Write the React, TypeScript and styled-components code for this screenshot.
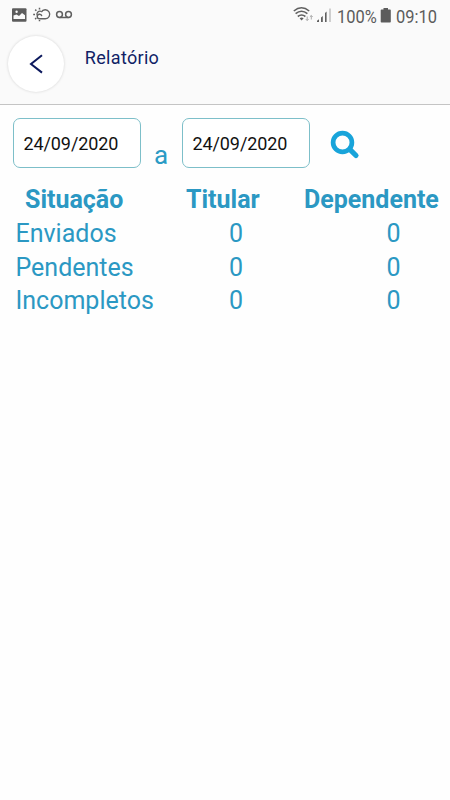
import React from "react";
import styled, { createGlobalStyle } from "styled-components";

const GlobalStyle = createGlobalStyle`
  * { box-sizing: border-box; }
  body { margin: 0; background: #fefefe; font-family: Roboto, "Noto Sans", sans-serif; }
`;

const Screen = styled.div`
  width: 450px;
  height: 800px;
  overflow: hidden;
  background: #fefefe;
`;

const Header = styled.header`
  height: 105px;
  background: #fafafa;
  border-bottom: 1px solid #c4c4c4;
`;

const StatusBar = styled.div`
  display: flex;
  justify-content: space-between;
  height: 32px;
  color: #5c5c5c;
  svg { display: block; flex: none; }
`;

const StatusText = styled.span<{ $left: number; $width: number }>`
  width: ${(p) => p.$width}px;
  margin-left: ${(p) => p.$left}px;
  font-size: 19px;
  line-height: 33px;
  white-space: nowrap;
  transform: scaleX(0.865);
  transform-origin: left center;
`;

const StatusGroup = styled.div`
  display: flex;
  width: 157px;
`;

const TitleBar = styled.div`
  display: flex;
  padding-left: 8px;
`;

const BackButton = styled.button`
  display: flex;
  align-items: center;
  justify-content: center;
  width: 56px;
  height: 56px;
  margin-top: 4px;
  padding: 0;
  border: 0;
  border-radius: 50%;
  background: #fff;
  box-shadow: 0 0 3px rgba(0, 0, 0, 0.16);
`;

const Title = styled.h1`
  margin: 15px 0 0 20.8px;
  color: #101f66;
  font-size: 18px;
  font-weight: 400;
  line-height: 22px;
  letter-spacing: 0.32px;
`;

const Filters = styled.form`
  display: flex;
  height: 78px;
  padding: 13px 0 0 13px;
`;

const DateField = styled.div`
  width: 128px;
  height: 50px;
  padding-left: 9.4px;
  border: 1px solid #7dbfc9;
  border-radius: 7px;
  background: #fff;
  color: #111;
  font-size: 18px;
  line-height: 50px;
  letter-spacing: -0.08px;
`;

const Separator = styled.span`
  width: 41px;
  padding: 21px 0 0 13px;
  color: #2b9bc5;
  font-size: 26px;
  line-height: 32px;
`;

const SearchButton = styled.button`
  width: 30px;
  height: 30px;
  margin: 12px 0 0 20px;
  padding: 0;
  border: 0;
  background: none;
  svg { display: block; }
`;

const Report = styled.table`
  width: 450px;
  table-layout: fixed;
  border-collapse: collapse;
  color: #2b98c3;
  font-size: 25px;
`;

const Row = styled.tr`
  height: 33.7px;
`;

const Heading = styled.th<{ $left: number; $width: number }>`
  width: ${(p) => p.$width}px;
  padding: 0 0 0 ${(p) => p.$left}px;
  font-weight: 700;
  line-height: 33px;
  text-align: left;
  white-space: nowrap;
`;

const Cell = styled.td<{ $left: number }>`
  padding: 0 0 0 ${(p) => p.$left}px;
  line-height: 33px;
`;

const NotificationIcons = () => (
  <svg width="80" height="32" viewBox="0 0 80 32" fill="none" stroke="#606060">
    <rect x="12" y="8.2" width="14.5" height="13.5" rx="1" fill="#5d5d5d" stroke="none" />
    <path d="M13.500 19v-3.500l3-1 2.500 1.500 3-3 3 2.200V19z" fill="#fafafa" stroke="none" />
    <circle cx="16.600" cy="11.800" r="1.200" fill="#fafafa" stroke="none" />
    <path d="M39.500 18.800h5.800a4.500 4.500 0 1 0-4-6.700M39.500 18.800a2.300 2.300 0 1 1 2.300-2.600" strokeWidth="1.400" />
    <path d="M41 11.300a3.100 3.100 0 0 0-4 3.700" strokeWidth="1.300" />
    <path d="M39.500 7.700v1.700M35.200 9.600l1.200 1.100M33.200 14.500h1.800M35.100 19.100l1.200-1.100M39.500 20v1.200" strokeWidth="1.500" />
    <circle cx="59.500" cy="14.500" r="2.900" strokeWidth="1.500" />
    <circle cx="68.500" cy="14.500" r="2.900" strokeWidth="1.500" />
    <path d="M59.500 17.500h9" strokeWidth="1.500" />
  </svg>
);

const SignalIcons = () => (
  <svg width="39" height="32" viewBox="293 0 39 32" fill="none" stroke="#606060">
    <path d="M293.800 11q7.700-6.500 15.400 0M295.600 13.700q5.900-4.900 11.800 0M297.800 16.500q3.800-3 7.600 0" strokeWidth="1.600" />
    <path d="M299.600 18.300q2-1.600 4 0l-2 2.200z" fill="#606060" stroke="none" />
    <path d="M307.200 16.500v4m-1.400-1.400 1.400 1.400 1.400-1.400M311.300 19.500v-4m-1.400 1.400 1.400-1.400 1.400 1.400" stroke="#a2a2a2" strokeWidth=".9" />
    <path d="M317 22v-1.200l2-1.500V22zM321 22v-4.500l1.800-1.500v6zM325 22v-9l1.600-1.500V22z" fill="#606060" stroke="none" />
    <path d="M330 8.500V22" stroke="#c5c5c5" strokeWidth="1.600" />
  </svg>
);

const BatteryIcon = () => (
  <svg width="19" height="32" viewBox="377 0 19 32">
    <path d="M383.500 8h4.500v1.500h2q.8 0 .8.8v11.400q0 .8-.8.800h-8.500q-.8 0-.8-.8V10.300q0-.8.8-.8h2z" fill="#5c5c5c" />
  </svg>
);

const ChevronIcon = () => (
  <svg width="56" height="56" viewBox="8 36 56 56">
    <path d="M42 55.200 31 64l11 8.600" fill="none" stroke="#0c195d" strokeWidth="2" />
  </svg>
);

const SearchIcon = () => (
  <svg width="30" height="30" viewBox="330 130 30 30" fill="none" stroke="#18a4da">
    <circle cx="342.500" cy="142.500" r="9.400" strokeWidth="4.700" />
    <path d="m349.800 149.300 6.200 6.200" strokeWidth="5.200" strokeLinecap="round" />
  </svg>
);

const rows = [
  { label: "Enviados", holder: 0, dependent: 0 },
  { label: "Pendentes", holder: 0, dependent: 0 },
  { label: "Incompletos", holder: 0, dependent: 0 },
];

export default function App() {
  return (
    <>
      <GlobalStyle />
      <Screen>
        <Header>
          <StatusBar>
            <NotificationIcons />
            <StatusGroup>
              <SignalIcons />
              <StatusText $left={5} $width={40}>100%</StatusText>
              <BatteryIcon />
              <StatusText $left={0} $width={42}>09:10</StatusText>
            </StatusGroup>
          </StatusBar>
          <TitleBar>
            <BackButton type="button" aria-label="Voltar"><ChevronIcon /></BackButton>
            <Title>Relatório</Title>
          </TitleBar>
        </Header>
        <Filters>
          <DateField>24/09/2020</DateField>
          <Separator>a</Separator>
          <DateField>24/09/2020</DateField>
          <SearchButton type="button" aria-label="Pesquisar"><SearchIcon /></SearchButton>
        </Filters>
        <Report>
          <thead>
            <Row>
              <Heading $left={25} $width={170}>Situação</Heading>
              <Heading $left={16} $width={120}>Titular</Heading>
              <Heading $left={14} $width={160}>Dependente</Heading>
            </Row>
          </thead>
          <tbody>
            {rows.map((row) => (
              <Row key={row.label}>
                <Cell $left={15.5}>{row.label}</Cell>
                <Cell $left={59}>{row.holder}</Cell>
                <Cell $left={96.5}>{row.dependent}</Cell>
              </Row>
            ))}
          </tbody>
        </Report>
      </Screen>
    </>
  );
}
